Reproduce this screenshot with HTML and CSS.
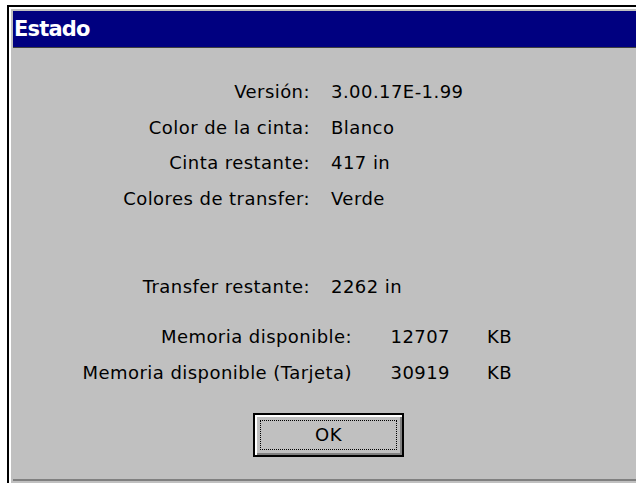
FILE: index.html
```html
<!DOCTYPE html>
<html lang="es">
<head>
<meta charset="utf-8">
<title>Estado</title>
<link rel="stylesheet" href="styles.css">
</head>
<body>
<div class="screen">
  <div class="dialog">
    <div class="frame">
      <div class="titlebar">Estado</div>
      <div class="client">
        <div class="info">
          <span class="label">Versión:</span><span class="value">3.00.17E-1.99</span>
          <span class="label">Color de la cinta:</span><span class="value">Blanco</span>
          <span class="label">Cinta restante:</span><span class="value">417 in</span>
          <span class="label">Colores de transfer:</span><span class="value">Verde</span>
        </div>
        <div class="info info-transfer">
          <span class="label">Transfer restante:</span><span class="value">2262 in</span>
        </div>
        <div class="memory">
          <span class="label">Memoria disponible:</span><span class="num">12707</span><span class="unit">KB</span>
          <span class="label">Memoria disponible (Tarjeta)</span><span class="num">30919</span><span class="unit">KB</span>
        </div>
        <div class="actions">
          <button class="btn" type="button"><span class="focus">OK</span></button>
        </div>
      </div>
    </div>
  </div>
</div>
</body>
</html>
```
FILE: styles.css
```css
html, body {
  margin: 0;
  padding: 0;
  background: #ffffff;
  overflow: hidden;
}

.screen {
  width: 636px;
  height: 483px;
  padding: 5px 0 0 7px;
  box-sizing: border-box;
  overflow: hidden;
}

.dialog {
  width: 680px;
  height: 480px;
  box-sizing: border-box;
  border-top: 2px solid #000000;
  border-left: 2px solid #000000;
  background: #c0c0c0;
}

.frame {
  height: 100%;
  box-sizing: border-box;
  border-top: 2px solid #ffffff;
  border-left: 2px solid #ffffff;
  padding: 2px 0 4px 2px;
  display: flex;
  flex-direction: column;
}

.titlebar {
  height: 36px;
  flex: none;
  background: #000080;
  border-bottom: 1px solid #404040;
  color: #ffffff;
  font-family: "DejaVu Sans", Verdana, sans-serif;
  font-weight: bold;
  font-size: 21px;
  line-height: 37px;
  padding-left: 1px;
  letter-spacing: -0.8px;
}

.client {
  flex: 1;
  border-bottom: 2px solid #808080;
  font-family: "DejaVu Sans", Verdana, sans-serif;
  font-size: 18px;
  letter-spacing: 0.45px;
  color: #000000;
  padding-top: 26px;
}

.info {
  display: grid;
  grid-template-columns: 297px auto;
  column-gap: 21px;
  grid-auto-rows: 35.5px;
  line-height: 35.5px;
}

.info-transfer {
  margin-top: 53px;
}

.label {
  text-align: right;
  white-space: nowrap;
}

.value {
  white-space: nowrap;
}

.memory {
  display: grid;
  grid-template-columns: 339px 98px auto;
  grid-auto-rows: 36px;
  line-height: 36px;
  margin-top: 14px;
}

.memory .num {
  text-align: right;
}

.memory .unit {
  padding-left: 37px;
}

.actions {
  display: flex;
  padding-left: 240px;
  margin-top: 22px;
}

.btn {
  width: 151px;
  height: 44px;
  margin: 0;
  padding: 0;
  box-sizing: border-box;
  background: #c0c0c0;
  border: 2px solid #000000;
  box-shadow: inset 2px 2px 0 #ffffff, inset -2px -2px 0 #808080;
  display: flex;
  align-items: stretch;
  font-family: "DejaVu Sans", Verdana, sans-serif;
  font-size: 18px;
  color: #000000;
  cursor: default;
}

.focus {
  flex: 1;
  margin: 5px;
  border: 1px dotted #000000;
  display: flex;
  align-items: center;
  justify-content: center;
  letter-spacing: 0.5px;
}
```
